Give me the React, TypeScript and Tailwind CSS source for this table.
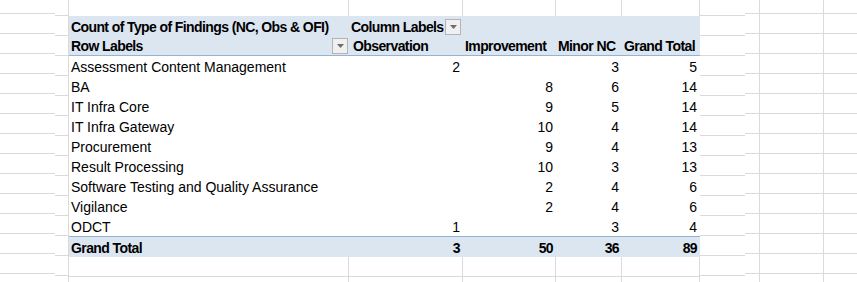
import React from "react";

type Row = { label: string; obs?: number; imp?: number; minor?: number; total: number };

const rows: Row[] = [
  { label: "Assessment Content Management", obs: 2, minor: 3, total: 5 },
  { label: "BA", imp: 8, minor: 6, total: 14 },
  { label: "IT Infra Core", imp: 9, minor: 5, total: 14 },
  { label: "IT Infra Gateway", imp: 10, minor: 4, total: 14 },
  { label: "Procurement", imp: 9, minor: 4, total: 13 },
  { label: "Result Processing", imp: 10, minor: 3, total: 13 },
  { label: "Software Testing and Quality Assurance", imp: 2, minor: 4, total: 6 },
  { label: "Vigilance", imp: 2, minor: 4, total: 6 },
  { label: "ODCT", obs: 1, minor: 3, total: 4 },
];

function GridStrip({ first, count, className }: { first: string; count: number; className: string }) {
  return (
    <div className={"flex flex-col shrink-0 " + className}>
      <div className={"shrink-0 border-b border-[#dadada] " + first} />
      {Array.from({ length: count }).map((_, i) => (
        <div key={i} className="h-[20px] shrink-0 border-b border-[#dadada]" />
      ))}
    </div>
  );
}

function DropBtn() {
  return (
    <div className="w-[16px] h-[16px] shrink-0 border border-[#b4b4b4] bg-[#f0f0f0] flex items-center justify-center">
      <svg width="7" height="4" viewBox="0 0 7 4">
        <polygon points="0,0 7,0 3.5,4" fill="#6d6d6d" />
      </svg>
    </div>
  );
}

const colA = "w-[280px]";
const colB = "w-[114px]";
const colC = "w-[93px]";
const colD = "w-[66px]";
const colE = "w-[78px]";

function GridRow({ last }: { last?: boolean }) {
  const b = last ? "" : "border-b ";
  const h = last ? "h-[6px]" : "h-[20px]";
  return (
    <div className={"flex shrink-0 " + h}>
      <div className={colA + " " + b + "border-r border-[#dadada]"} />
      <div className={colB + " " + b + "border-r border-[#dadada]"} />
      <div className={colC + " " + b + "border-r border-[#dadada]"} />
      <div className={colD + " " + b + "border-r border-[#dadada]"} />
      <div className={colE + " " + b + "border-r border-[#dadada]"} />
    </div>
  );
}

function Num({ v, w, bold }: { v?: number; w: string; bold?: boolean }) {
  return (
    <div className={w + " shrink-0 text-right pr-[3px] " + (bold ? "font-bold tracking-[-0.6px]" : "")}>{v ?? ""}</div>
  );
}

export default function App() {
  return (
    <div className="w-[857px] h-[282px] overflow-hidden bg-white flex text-black font-['Liberation_Sans',Arial,sans-serif] text-[14px] leading-[20px]">
      {/* left margin strips */}
      <GridStrip first="h-[14px]" count={14} className="w-[55px]" />
      <div className="w-[14px] shrink-0 border-r border-[#dadada] flex flex-col">
        <div className="h-[16px] shrink-0 border-b border-[#dadada]" />
        {Array.from({ length: 14 }).map((_, i) => (
          <div key={i} className="h-[20px] shrink-0 border-b border-[#dadada]" />
        ))}
      </div>

      {/* sheet area with pivot */}
      <div className="flex flex-col shrink-0 w-[631px]">
        <div className="flex h-[16px] shrink-0">
          <div className={colA + " border-r border-[#dadada]"} />
          <div className={colB + " border-r border-[#dadada]"} />
          <div className={colC + " border-r border-[#dadada]"} />
          <div className={colD + " border-r border-[#dadada]"} />
          <div className={colE + " border-r border-[#dadada]"} />
        </div>

        {/* header row 1 */}
        <div className="flex h-[20px] shrink-0 bg-[#dce6f1] font-bold tracking-[-0.6px] items-center pt-[2px]">
          <div className={colA + " shrink-0 pl-[2px] whitespace-nowrap"}>Count of Type of Findings (NC, Obs &amp; OFI)</div>
          <div className={colB + " shrink-0 flex items-center justify-between pl-[2px] pr-[2px] whitespace-nowrap"}>
            <span>Column Labels</span>
            <DropBtn />
          </div>
          <div className={colC} />
          <div className={colD} />
          <div className={colE} />
        </div>

        {/* header row 2 */}
        <div className="flex h-[20px] shrink-0 bg-[#dce6f1] font-bold tracking-[-0.6px] items-center border-b border-[#95b3d7] pt-[1px] whitespace-nowrap">
          <div className={colA + " shrink-0 flex items-center justify-between pl-[2px] pr-[1px]"}>
            <span>Row Labels</span>
            <DropBtn />
          </div>
          <div className={colB + " shrink-0 pl-[4px]"}>Observation</div>
          <div className={colC + " shrink-0 pl-[2px]"}>Improvement</div>
          <div className={colD + " shrink-0 pl-[2px]"}>Minor NC</div>
          <div className={colE + " shrink-0 pl-[2px]"}>Grand Total</div>
        </div>

        {rows.map((r) => (
          <div key={r.label} className="flex h-[20px] shrink-0 items-center pt-[2px]">
            <div className={colA + " shrink-0 pl-[2px] whitespace-nowrap"}>{r.label}</div>
            <Num v={r.obs} w={colB} />
            <Num v={r.imp} w={colC} />
            <Num v={r.minor} w={colD} />
            <Num v={r.total} w={colE} />
          </div>
        ))}

        {/* grand total */}
        <div className="flex h-[21px] shrink-0 items-center bg-[#dce6f1] border-t border-[#95b3d7] pt-[1px]">
          <div className={colA + " shrink-0 pl-[2px] font-bold tracking-[-0.6px]"}>Grand Total</div>
          <Num v={3} w={colB} bold />
          <Num v={50} w={colC} bold />
          <Num v={36} w={colD} bold />
          <Num v={89} w={colE} bold />
        </div>

        <GridRow />
        <GridRow last />
      </div>

      {/* right side */}
      <div className="w-[45px] shrink-0 flex flex-col">
        <div className="h-[16px] shrink-0 border-b border-[#dadada]" />
        {Array.from({ length: 14 }).map((_, i) => (
          <div key={i} className="h-[20px] shrink-0 border-b border-[#dadada]" />
        ))}
      </div>
      <div className="flex shrink-0">
        <GridStrip first="h-[14px]" count={14} className="w-[15px] border-r border-[#dadada]" />
        <GridStrip first="h-[14px]" count={14} className="w-[64px] border-r border-[#dadada]" />
        <GridStrip first="h-[14px]" count={14} className="w-[40px]" />
      </div>
    </div>
  );
}
